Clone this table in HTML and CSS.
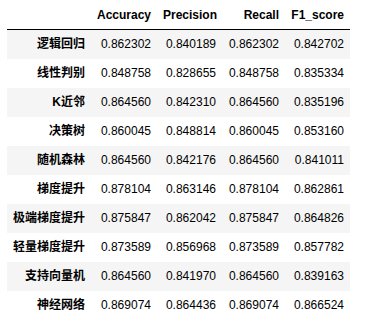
FILE: index.html
```html
<!DOCTYPE html>
<html>
<head>
<meta charset="utf-8">
<link rel="stylesheet" href="styles.css">
</head>
<body>
<div class="output">
<table class="dataframe">
<colgroup>
<col class="c-idx"><col class="c-acc"><col class="c-pre"><col class="c-rec"><col class="c-f1">
</colgroup>
<thead>
<tr><th></th><th>Accuracy</th><th>Precision</th><th>Recall</th><th>F1_score</th></tr>
</thead>
<tbody>
<tr><th>逻辑回归</th><td>0.862302</td><td>0.840189</td><td>0.862302</td><td>0.842702</td></tr>
<tr><th>线性判别</th><td>0.848758</td><td>0.828655</td><td>0.848758</td><td>0.835334</td></tr>
<tr><th>K近邻</th><td>0.864560</td><td>0.842310</td><td>0.864560</td><td>0.835196</td></tr>
<tr><th>决策树</th><td>0.860045</td><td>0.848814</td><td>0.860045</td><td>0.853160</td></tr>
<tr><th>随机森林</th><td>0.864560</td><td>0.842176</td><td>0.864560</td><td>0.841011</td></tr>
<tr><th>梯度提升</th><td>0.878104</td><td>0.863146</td><td>0.878104</td><td>0.862861</td></tr>
<tr><th>极端梯度提升</th><td>0.875847</td><td>0.862042</td><td>0.875847</td><td>0.864826</td></tr>
<tr><th>轻量梯度提升</th><td>0.873589</td><td>0.856968</td><td>0.873589</td><td>0.857782</td></tr>
<tr><th>支持向量机</th><td>0.864560</td><td>0.841970</td><td>0.864560</td><td>0.839163</td></tr>
<tr><th>神经网络</th><td>0.869074</td><td>0.864436</td><td>0.869074</td><td>0.866524</td></tr>
</tbody>
</table>
</div>
</body>
</html>
```
FILE: styles.css
```css
html, body {
  margin: 0;
  padding: 0;
  background: #ffffff;
}
.output {
  padding-left: 7px;
  font-family: "Liberation Sans", Arial, "Noto Sans CJK SC", sans-serif;
  font-size: 12px;
  color: #000000;
}
.dataframe {
  border-collapse: collapse;
  border-spacing: 0;
  border: none;
  table-layout: fixed;
  width: 343px;
}
.c-idx { width: 84px; }
.c-acc { width: 66px; }
.c-pre { width: 65px; }
.c-rec { width: 63px; }
.c-f1 { width: 65px; }
.dataframe thead {
  border-bottom: 1px solid #000000;
}
.dataframe th,
.dataframe td {
  padding: 6px 6px;
  height: 17px;
  line-height: 17px;
  text-align: right;
  white-space: nowrap;
  border: none;
}
.dataframe thead th {
  vertical-align: bottom;
  font-weight: bold;
  padding-bottom: 5px;
  padding-top: 7px;
}
.dataframe tbody th {
  font-weight: bold;
  vertical-align: middle;
}
.dataframe tbody td {
  vertical-align: middle;
}
.dataframe tbody tr:nth-child(odd) {
  background: #f5f5f5;
}
```
